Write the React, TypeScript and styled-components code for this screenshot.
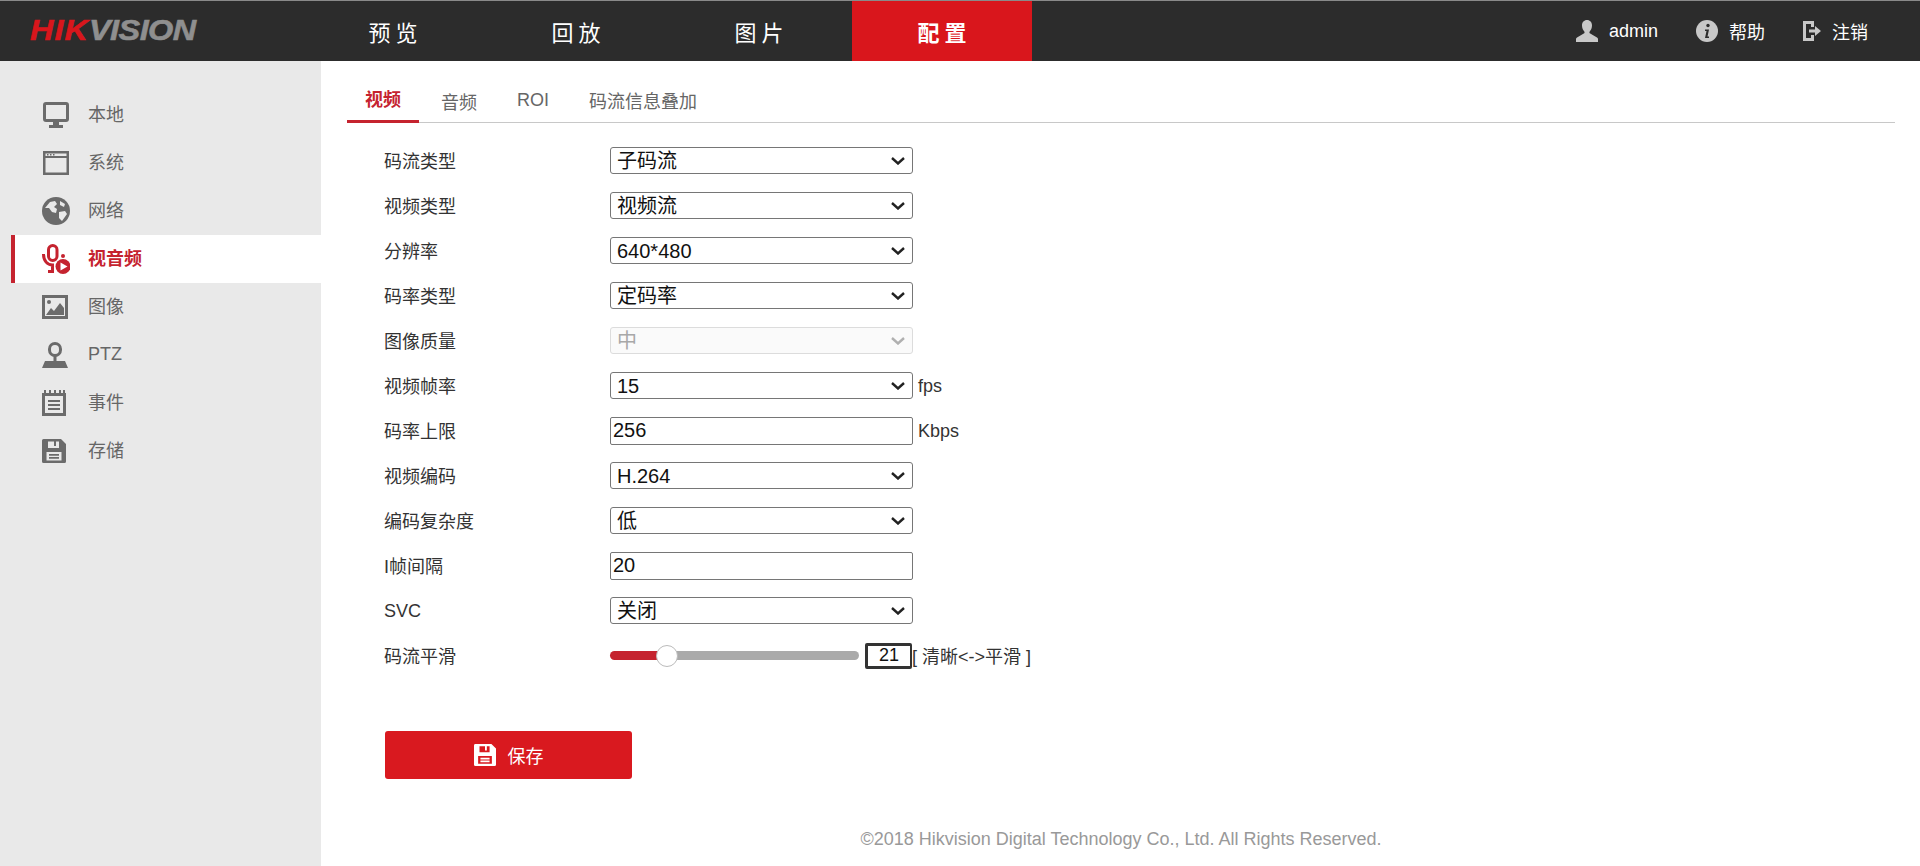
import React from "react";
import styled, { createGlobalStyle } from "styled-components";

const GlobalStyle = createGlobalStyle`
  html, body {
    margin: 0;
    padding: 0;
    background: #fff;
    font-family: "Liberation Sans", "Noto Sans CJK SC", sans-serif;
  }
  * { box-sizing: border-box; }
`;

const chevron = (color: string) =>
  `url("data:image/svg+xml,%3Csvg xmlns='http://www.w3.org/2000/svg' width='14' height='8' viewBox='0 0 14 8'%3E%3Cpath d='M1 1l6 5.500L13 1' fill='none' stroke='${color}' stroke-width='2.400'/%3E%3C/svg%3E")`;

const Page = styled.div`
  width: 1920px;
  height: 866px;
  display: flex;
  flex-direction: column;
  overflow: hidden;
`;

const Header = styled.header`
  height: 61px;
  flex: none;
  display: flex;
  align-items: stretch;
  background: #2c2c2c;
  border-top: 1px solid #8a8a8a;
  color: #fff;
`;

const LogoSlot = styled.div`
  width: 303px;
  flex: none;
  padding: 0 0 2px 30px;
  display: flex;
  align-items: center;
`;

const Logo = styled.div`
  font-size: 30px;
  font-weight: bold;
  font-style: italic;
  letter-spacing: -0.5px;
  color: #8f8f8f;
  -webkit-text-stroke: 0.6px currentColor;
  transform: scaleX(1.08);
  transform-origin: left center;
  & > span {
    color: #d9161c;
    letter-spacing: 1px;
  }
`;

const Nav = styled.nav`
  display: flex;
  gap: 3px;
`;

const NavItem = styled.div<{ $active?: boolean }>`
  width: 180px;
  display: flex;
  align-items: center;
  justify-content: center;
  font-size: 22px;
  letter-spacing: 5px;
  padding-left: 5px;
  font-weight: ${(p) => (p.$active ? "bold" : "normal")};
  background: ${(p) => (p.$active ? "#d9161c" : "transparent")};
`;

const Tools = styled.div`
  margin-left: auto;
  padding-right: 52px;
  display: flex;
  align-items: center;
  gap: 38px;
`;

const Tool = styled.div`
  display: flex;
  align-items: center;
  gap: 11px;
  font-size: 18px;
  & > svg {
    color: #c8c8c8;
  }
`;

const Body = styled.div`
  flex: 1;
  display: flex;
  min-height: 0;
`;

const Sidebar = styled.aside`
  width: 321px;
  flex: none;
  background: #e9e9e9;
  padding: 30px 0 0 11px;
`;

const MenuItem = styled.div<{ $active?: boolean }>`
  height: 48px;
  display: flex;
  align-items: center;
  gap: 18px;
  padding-left: 27px;
  font-size: 18px;
  border-left: 4px solid ${(p) => (p.$active ? "#c5232f" : "transparent")};
  background: ${(p) => (p.$active ? "#fff" : "transparent")};
  color: ${(p) => (p.$active ? "#c5232f" : "#666")};
  font-weight: ${(p) => (p.$active ? "bold" : "normal")};
`;

const MenuIcon = styled.span`
  width: 28px;
  flex: none;
  display: flex;
  justify-content: flex-start;
`;

const MenuLabel = styled.span<{ $latin?: boolean }>`
  padding-bottom: ${(p) => (p.$latin ? 2 : 4)}px;
`;

const Main = styled.main`
  flex: 1;
  display: flex;
  flex-direction: column;
  padding: 0 25px 0 26px;
`;

const TabBar = styled.div`
  height: 62px;
  flex: none;
  display: flex;
  align-items: flex-end;
  border-bottom: 1px solid #c8c8c8;
`;

const Tab = styled.div<{ $active?: boolean; $drop?: number }>`
  height: 40px;
  margin-bottom: -1px;
  padding: ${(p) => 4 + (p.$drop ?? 0)}px 18px 0;
  margin-left: ${(p) => (p.$active ? 0 : 4)}px;
  font-size: 18px;
  line-height: 26px;
  color: ${(p) => (p.$active ? "#c5232f" : "#666")};
  font-weight: ${(p) => (p.$active ? "bold" : "normal")};
  border-bottom: 3px solid ${(p) => (p.$active ? "#c5232f" : "transparent")};
`;

const Form = styled.form`
  padding: 15px 0 0 37px;
`;

const Row = styled.div`
  height: 45px;
  display: flex;
  align-items: center;
  font-size: 18px;
  color: #333;
`;

const Label = styled.label<{ $latin?: boolean }>`
  width: 226px;
  flex: none;
  padding: ${(p) => (p.$latin ? "2px 0 0" : "0 0 2px")};
`;

const Select = styled.select`
  appearance: none;
  width: 303px;
  height: 27px;
  padding: 0 24px 0 6px;
  font-family: inherit;
  font-size: 20px;
  color: #111;
  background: #fff ${chevron("%23222")} no-repeat right 7px center;
  border: 1px solid #767676;
  border-radius: 3px;
  &:disabled {
    color: #a8a8a8;
    background: #fafafa ${chevron("%23b0b0b0")} no-repeat right 7px center;
    border-color: #dcdcdc;
    opacity: 1;
  }
`;

const TextInput = styled.input`
  width: 303px;
  height: 28px;
  padding: 0 2px;
  font-family: inherit;
  font-size: 20px;
  color: #111;
  border: 1px solid #767676;
  border-radius: 2px;
`;

const Unit = styled.span`
  margin-left: 5px;
  padding-top: 2px;
  font-size: 18px;
  color: #333;
`;

const Slider = styled.input<{ $fill: number }>`
  appearance: none;
  width: 249px;
  height: 9px;
  margin: 0;
  border-radius: 5px;
  background: linear-gradient(
    to right,
    #c5232f ${(p) => p.$fill}%,
    #aaaaaa ${(p) => p.$fill}%
  );
  &::-webkit-slider-thumb {
    appearance: none;
    width: 22px;
    height: 22px;
    border-radius: 50%;
    background: #fff;
    border: 1px solid #bbb;
  }
`;

const SliderValue = styled.input`
  width: 47px;
  height: 26px;
  margin-left: 6px;
  padding: 0;
  text-align: center;
  font-family: inherit;
  font-size: 18px;
  color: #111;
  border: solid #333;
  border-width: 3px 2px 3px 3px;
  border-radius: 2px;
`;

const Hint = styled.span`
  padding-bottom: 2px;
  font-size: 18px;
  color: #333;
  white-space: nowrap;
`;

const SaveButton = styled.button`
  width: 247px;
  height: 48px;
  margin: 53px 0 0 1px;
  display: flex;
  align-items: center;
  justify-content: center;
  gap: 12px;
  border: 0;
  border-radius: 3px;
  font-family: inherit;
  font-size: 18px;
  color: #fff;
  background: #d9191f;
`;

const Footer = styled.footer`
  margin-top: auto;
  padding-bottom: 15px;
  text-align: center;
  font-size: 18px;
  line-height: 24px;
  color: #999;
`;

const MonitorIcon = () => (
  <svg width="28" height="26" viewBox="0 0 28 26" fill="#6b6b6b">
    <path fillRule="evenodd" d="M4 0h20a3 3 0 0 1 3 3v14a3 3 0 0 1-3 3H4a3 3 0 0 1-3-3V3a3 3 0 0 1 3-3zm0 3v14h20V3z" />
    <path d="M11 20h6v3h4v3H7v-3h4z" />
  </svg>
);

const WindowIcon = () => (
  <svg width="28" height="24" viewBox="0 0 28 24" fill="#6b6b6b">
    <path fillRule="evenodd" d="M1 0h26v24H1zm2.500 7v14.500h21V7zm0-4.500V5h21V2.500z" />
    <path d="M5 3h1.500v1.500H5zM8 3h1.500v1.500H8zM11 3h1.500v1.500H11z" />
  </svg>
);

const GlobeIcon = () => (
  <svg width="28" height="28" viewBox="0 0 28 28" fill="#6b6b6b">
    <circle cx="14" cy="14" r="14" />
    <path fill="#e9e9e9" d="M3 11l5-6 5-1 2 3-3 3 3 2-1 4-4-1-3-4zM17 15l6-1 2 3-5 7-3-3zM18 4l5 3-1 3-4-2z" />
  </svg>
);

const MicIcon = () => (
  <svg width="28" height="30" viewBox="0 0 28 30" fill="none" stroke="#c5232f" strokeWidth="3">
    <rect x="6.500" y="1.500" width="8.500" height="15" rx="4.200" />
    <path d="M1.500 10c0 7 4 11 9 11v6.500H6" />
    <circle cx="21" cy="12" r="2" fill="#c5232f" stroke="none" />
    <circle cx="21" cy="22.500" r="7.500" fill="#c5232f" stroke="none" />
    <path d="M18.500 18.500l7 4-7 4z" fill="#fff" stroke="none" />
  </svg>
);

const ImageIcon = () => (
  <svg width="26" height="24" viewBox="0 0 26 24" fill="#6b6b6b">
    <path fillRule="evenodd" d="M0 0h26v24H0zm3 3v18h20V3z" />
    <circle cx="7" cy="7" r="2" />
    <path d="M4 20l5-7 3 3 6-8 4 5v7z" />
  </svg>
);

const PtzIcon = () => (
  <svg width="26" height="26" viewBox="0 0 26 26" fill="#6b6b6b">
    <path fillRule="evenodd" d="M13 0a7 7 0 0 1 7 7v1a7 7 0 0 1-14 0V7a7 7 0 0 1 7-7zm0 3a4 4 0 0 0-4 4v1a4 4 0 0 0 8 0V7a4 4 0 0 0-4-4z" />
    <path d="M11.500 14h3v5H23l3 7H0l3-7h8.500z" />
  </svg>
);

const EventIcon = () => (
  <svg width="24" height="26" viewBox="0 0 24 26" fill="#6b6b6b">
    <path fillRule="evenodd" d="M0 3h24v23H0zm3 3v17h18V6z" />
    <path d="M2 0h2v4H2zM7 0h2v4H7zM12 0h2v4h-2zM17 0h2v4h-2zM21 0h2v4h-2zM6 10h12v2H6zM6 14h12v2H6zM6 18h12v2H6z" />
  </svg>
);

const SaveIcon = ({ size = 24, color = "#6b6b6b" }: { size?: number; color?: string }) => (
  <svg width={size} height={size} viewBox="0 0 24 24" fill={color}>
    <path fillRule="evenodd" d="M0 1.500A1.500 1.500 0 0 1 1.500 0H19l5 5v17.500a1.500 1.500 0 0 1-1.500 1.500h-21A1.500 1.500 0 0 1 0 22.500zM6 2.500V9h11V2.500h-3V7h-2V2.500zM4.500 13v8.500h15V13z" />
    <path d="M7 15h10v1.800H7zM7 18h10v1.800H7z" />
  </svg>
);

const UserIcon = () => (
  <svg width="22" height="22" viewBox="0 0 22 22" fill="currentColor">
    <path d="M11 0c3 0 5 2.300 5 5.500 0 2.500-1 4.500-2.300 6-.5.800-.3 1.600.5 2l6.800 4c.7.400 1 1 1 1.500V22H0v-3c0-.5.300-1.100 1-1.500l6.800-4c.8-.4 1-1.200.5-2C7 10 6 8 6 5.500 6 2.300 8 0 11 0z" />
  </svg>
);

const InfoIcon = () => (
  <svg width="22" height="22" viewBox="0 0 22 22">
    <circle cx="11" cy="11" r="11" fill="currentColor" />
    <circle cx="12" cy="5.500" r="1.700" fill="#2c2c2c" />
    <path d="M9 9.500h4l-1.500 7h1.500v1.500H9l1.500-7H9z" fill="#2c2c2c" />
  </svg>
);

const LogoutIcon = () => (
  <svg width="18" height="20" viewBox="0 0 18 20" fill="currentColor">
    <path d="M0 0h11v6H8V3H3v14h5v-3h3v6H0z" />
    <path d="M6 8.500h6V5l6 5-6 5v-3.500H6z" />
  </svg>
);

const menu = [
  { label: "本地", icon: <MonitorIcon /> },
  { label: "系统", icon: <WindowIcon /> },
  { label: "网络", icon: <GlobeIcon /> },
  { label: "视音频", icon: <MicIcon />, active: true },
  { label: "图像", icon: <ImageIcon /> },
  { label: "PTZ", icon: <PtzIcon />, latin: true },
  { label: "事件", icon: <EventIcon /> },
  { label: "存储", icon: <SaveIcon /> },
];

const SelectRow = ({
  label,
  value,
  unit,
  disabled,
  latin,
}: {
  label: string;
  value: string;
  unit?: string;
  disabled?: boolean;
  latin?: boolean;
}) => (
  <Row>
    <Label $latin={latin}>{label}</Label>
    <Select defaultValue={value} disabled={disabled}>
      <option>{value}</option>
    </Select>
    {unit && <Unit>{unit}</Unit>}
  </Row>
);

const InputRow = ({
  label,
  value,
  unit,
}: {
  label: string;
  value: string;
  unit?: string;
}) => (
  <Row>
    <Label>{label}</Label>
    <TextInput defaultValue={value} />
    {unit && <Unit>{unit}</Unit>}
  </Row>
);

const App = () => {
  return (
    <Page>
      <GlobalStyle />
      <Header>
        <LogoSlot>
          <Logo>
            <span>HIK</span>VISION
          </Logo>
        </LogoSlot>
        <Nav>
          <NavItem>预览</NavItem>
          <NavItem>回放</NavItem>
          <NavItem>图片</NavItem>
          <NavItem $active>配置</NavItem>
        </Nav>
        <Tools>
          <Tool>
            <UserIcon />
            admin
          </Tool>
          <Tool>
            <InfoIcon />
            帮助
          </Tool>
          <Tool>
            <LogoutIcon />
            注销
          </Tool>
        </Tools>
      </Header>
      <Body>
        <Sidebar>
          {menu.map((item) => (
            <MenuItem key={item.label} $active={item.active}>
              <MenuIcon>{item.icon}</MenuIcon>
              <MenuLabel $latin={item.latin}>{item.label}</MenuLabel>
            </MenuItem>
          ))}
        </Sidebar>
        <Main>
          <TabBar>
            <Tab $active>视频</Tab>
            <Tab $drop={3}>音频</Tab>
            <Tab>ROI</Tab>
            <Tab $drop={2}>码流信息叠加</Tab>
          </TabBar>
          <Form>
            <SelectRow label="码流类型" value="子码流" />
            <SelectRow label="视频类型" value="视频流" />
            <SelectRow label="分辨率" value="640*480" />
            <SelectRow label="码率类型" value="定码率" />
            <SelectRow label="图像质量" value="中" disabled />
            <SelectRow label="视频帧率" value="15" unit="fps" />
            <InputRow label="码率上限" value="256" unit="Kbps" />
            <SelectRow label="视频编码" value="H.264" />
            <SelectRow label="编码复杂度" value="低" />
            <InputRow label="I帧间隔" value="20" />
            <SelectRow label="SVC" value="关闭" latin />
            <Row>
              <Label>码流平滑</Label>
              <Slider type="range" min={1} max={100} defaultValue={21} $fill={21} />
              <SliderValue defaultValue="21" />
              <Hint>[ 清晰&lt;-&gt;平滑 ]</Hint>
            </Row>
            <SaveButton type="button">
              <SaveIcon size={22} color="#fff" />
              保存
            </SaveButton>
          </Form>
          <Footer>©2018 Hikvision Digital Technology Co., Ltd. All Rights Reserved.</Footer>
        </Main>
      </Body>
    </Page>
  );
};

export default App;
